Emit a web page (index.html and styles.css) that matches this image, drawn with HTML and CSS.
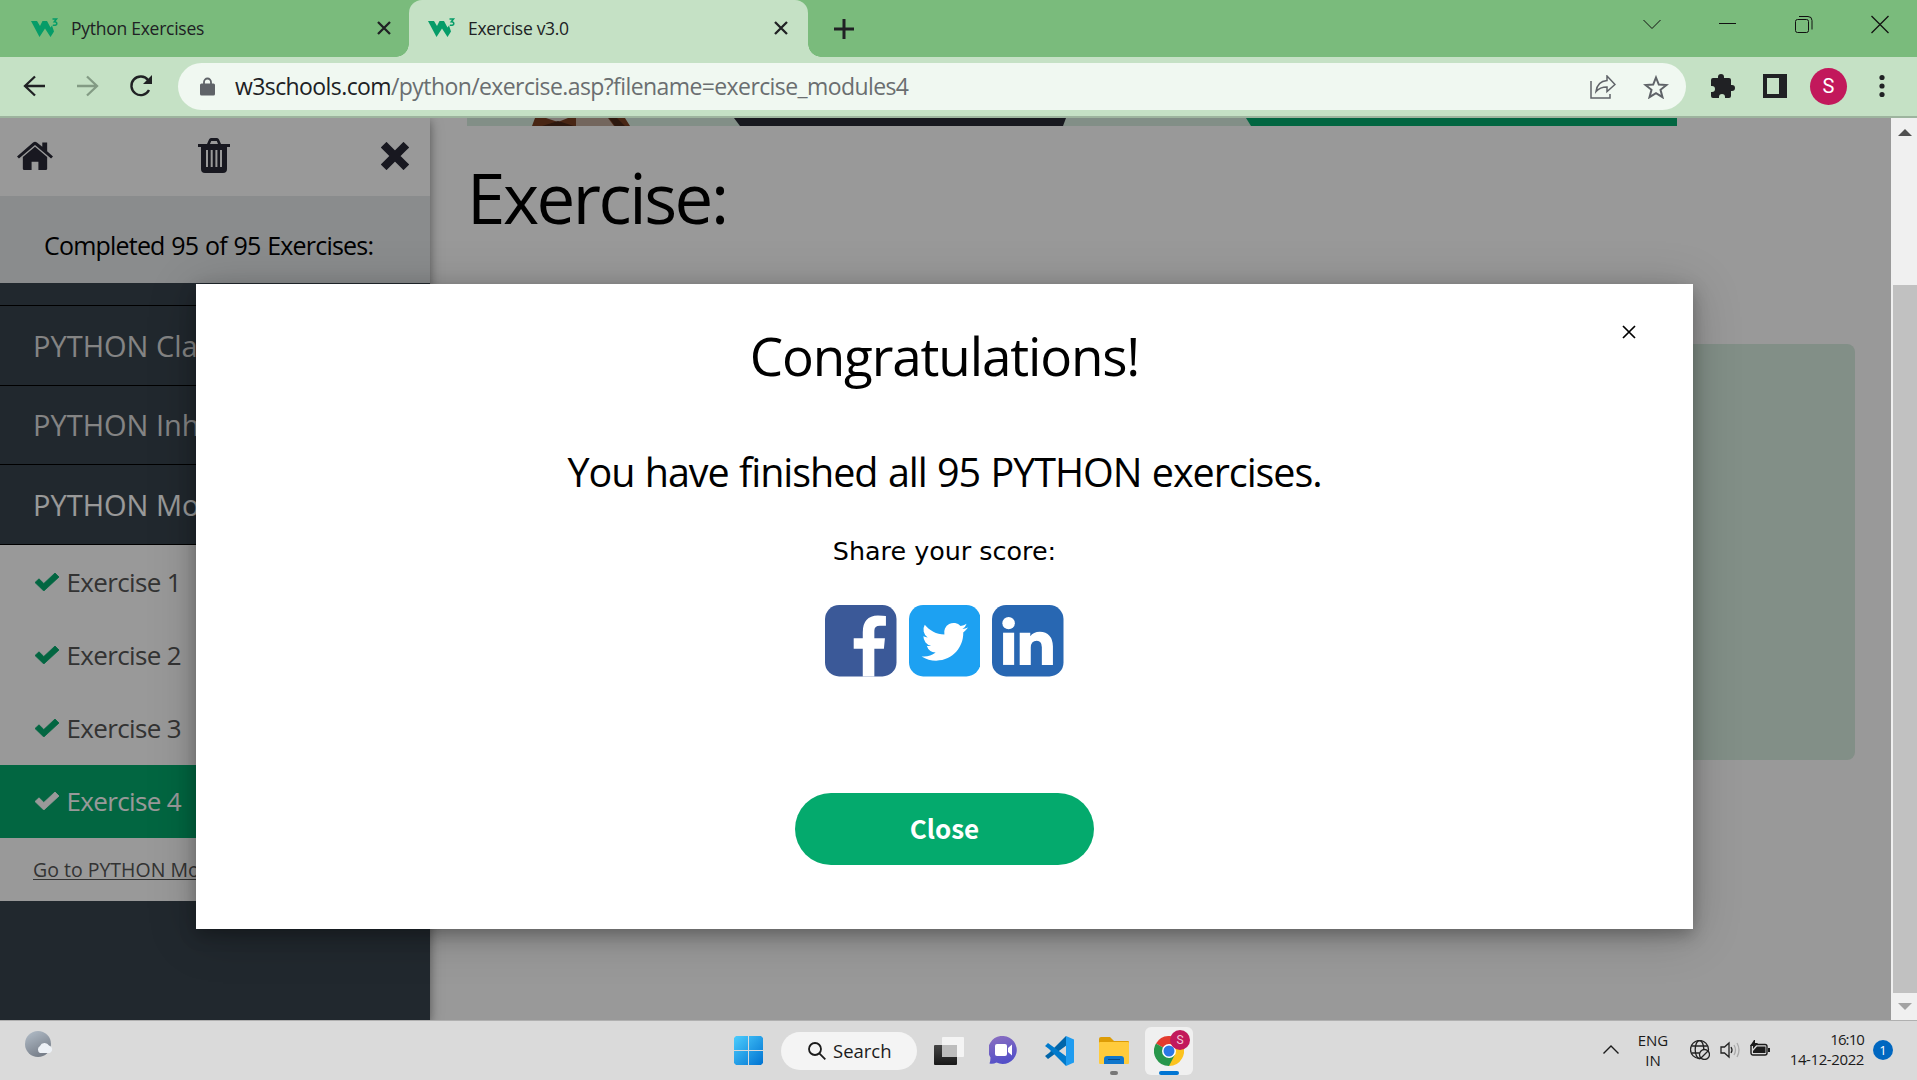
FILE: index.html
```html
<!DOCTYPE html>
<html lang="en">
<head>
<meta charset="utf-8">
<title>Exercise v3.0</title>
<link rel="stylesheet" href="styles.css">
</head>
<body>
<svg class="defs" width="0" height="0">
  <defs>
    <symbol id="w3" viewBox="0 0 28 20">
      <path d="M0 3h6l3 5 2.500-5H16l3.500 6.500 1.500-2 2 6-3.500 5.500-5.500-8.500L8.500 19z" fill="#059c68"/>
      <path d="M21.500 1h4l-2.200 2.700q2.500 0 2.500 2t-4 1.500" fill="none" stroke="#059c68" stroke-width="1.500"/>
    </symbol>
    <symbol id="x" viewBox="0 0 14 14"><path d="M1 1l12 12M13 1L1 13" fill="none" stroke="currentColor" stroke-width="2.300"/></symbol>
    <symbol id="check" viewBox="0 0 24 18"><path d="M0 9.500L4 5.800l4.800 4.700L20 0l4 4L8.800 18z" fill="currentColor" stroke="currentColor" stroke-linejoin="round" stroke-width=".8"/></symbol>
  </defs>
</svg>

<header class="browser">
  <div class="tabs">
    <div class="tab">
      <svg class="fav"><use href="#w3"/></svg><span class="tab-title">Python Exercises</span>
      <svg class="tab-x"><use href="#x"/></svg>
    </div>
    <div class="tab active">
      <svg class="fav"><use href="#w3"/></svg><span class="tab-title t2">Exercise v3.0</span>
      <svg class="tab-x"><use href="#x"/></svg>
    </div>
    <svg class="plus" width="20" height="20"><path d="M10 0v20M0 10h20" stroke="#202124" stroke-width="3"/></svg>
    <div class="controls">
      <svg width="76" height="48"><path d="M29.500 20l8.500 8.500 8.500-8.500" fill="none" stroke="#111"/></svg>
      <svg width="76" height="48"><path d="M29 23.500h17" stroke="#111"/></svg>
      <svg width="76" height="48" fill="none" stroke="#111"><rect x="29.500" y="19.500" width="13" height="13" rx="2"/><path d="M33 16.500h9q4 0 4 4v9"/></svg>
      <svg width="76" height="48"><path d="M29.500 16l17 17M46.500 16l-17 17" stroke="#111" stroke-width="1.300"/></svg>
    </div>
  </div>
  <div class="toolbar">
    <svg width="22" height="22" fill="none" stroke="#202124" stroke-width="2.300"><path d="M22 11H2.500M12 1.500L2 11l10 9.500"/></svg>
    <svg width="22" height="22" fill="none" stroke="#839b84" stroke-width="2.300"><path d="M0 11h19.500M10 1.500L20 11l-10 9.500"/></svg>
    <svg width="24" height="24"><path d="M20 16a9.300 9.300 0 1 1-1-10" fill="none" stroke="#202124" stroke-width="2.400"/><path d="M23 1v9h-9z" fill="#202124"/></svg>
    <div class="omnibox">
      <svg class="lock" width="15" height="19"><path d="M4 8V5a3.500 3.500 0 0 1 7 0v3" fill="none" stroke="#5f6368" stroke-width="1.800"/><rect y="6.500" width="15" height="12" rx="1.500" fill="#5f6368"/></svg>
      <span class="url"><b>w3schools.com</b>/python/exercise.asp?filename=exercise_modules4</span>
      <svg class="share" width="26" height="24" fill="none" stroke="#5f6368" stroke-width="1.500"><path d="M1 6v17h19v-4"/><path d="M6 16.500C7 9 11 6 17 5.500V1l8 8.500-8 7v-4.500c-5 0-8 1-11 4.500z"/></svg>
      <svg width="26" height="24"><path d="M13 2.500l2.800 7 7.700.5-6 4.800 2 7.400-6.500-4.100-6.500 4.100 2-7.400-6-4.800 7.700-.5z" fill="none" stroke="#5f6368" stroke-width="2"/></svg>
    </div>
    <svg class="puzzle" width="24" height="24" fill="#202124"><path d="M2 4h5V3a3 3 0 0 1 6 0v1h5q2 0 2 2v5h1a3 3 0 0 1 0 6h-1v5q0 2-2 2h-4v-1a3 3 0 0 0-6 0v1H2q-2 0-2-2v-4h1a3 3 0 0 0 0-6H0V6q0-2 2-2z"/></svg>
    <svg width="24" height="24"><path d="M0 0h24v24H0zM4 4v16h12V4z" fill="#202124" fill-rule="evenodd"/></svg>
    <span class="avatar">S</span>
    <svg width="6" height="24" fill="#202124"><circle cx="3" cy="3.500" r="2.600"/><circle cx="3" cy="12" r="2.600"/><circle cx="3" cy="20.500" r="2.600"/></svg>
  </div>
</header>

<div class="viewport">
  <div class="page">
    <nav class="side">
      <div class="side-tools">
        <svg width="36" height="30" viewBox="0 0 37 30" fill="#282936"><path d="M18.500 5.500L31 16v12q0 1.500-1.500 1.500H22V21h-7v8.500H7.500Q6 29.500 6 28V16z"/><path d="M0 15.500L16.500 1q2-1.500 4 0L26 5.500V1h5v9l6 5.500-2 2L18.500 3.700 2 17.500z"/></svg>
        <svg class="trash" width="32" height="35" fill="#282936"><path d="M0 6h9l2-4.500Q11.600 0 13 0h6q1.400 0 2 1.500L23 6h9v3h-3v22q0 4-4 4H7q-4 0-4-4V9H0zM12 6h8l-1.200-3h-5.600zM8 12v17h2V12zm4.700 0v17h2V12zm4.700 0v17h2V12zM22 12v17h2V12z" fill-rule="evenodd"/></svg>
        <svg width="28" height="28"><path d="M5.500 5.500l17 17M22.500 5.500l-17 17" stroke="#282936" stroke-width="8" stroke-linecap="square"/></svg>
      </div>
      <div class="done">Completed 95 of 95 Exercises:</div>
      <div class="item cut"></div>
      <div class="item">PYTHON Classes</div>
      <div class="item mid">PYTHON Inheritance</div>
      <div class="item open">PYTHON Modules</div>
      <div class="exs">
        <div class="ex"><svg><use href="#check"/></svg>Exercise 1</div>
        <div class="ex"><svg><use href="#check"/></svg>Exercise 2</div>
        <div class="ex"><svg><use href="#check"/></svg>Exercise 3</div>
        <div class="ex current"><svg><use href="#check"/></svg>Exercise 4</div>
        <a class="goto">Go to PYTHON Modules</a>
      </div>
    </nav>
    <main class="content">
      <svg class="banner" width="1210" height="8">
        <rect width="1210" height="8" fill="#d9eee1"/>
        <path d="M68 0h90l5 8H65z" fill="#7a4022"/><path d="M79 0h22l-10 4z" fill="#d9d0c8"/><path d="M75 8l16-5 16 5z" fill="#4c2818"/><path d="M109 0h32l6 8h-38z" fill="#c0aa9c"/><path d="M142 0h8l8 8h-10z" fill="#4c2818"/>
        <path d="M267 0h332l-3 8H273z" fill="#282a35"/>
        <path d="M779 0h431v8H784z" fill="#04aa6d"/>
      </svg>
      <h1>Exercise:</h1>
      <div class="codebox"></div>
    </main>
    <div class="overlay">
      <section class="modal">
        <svg class="modal-x" width="14" height="14"><path d="M1 1l12 12M13 1L1 13" stroke="#000" stroke-width="1.700"/></svg>
        <h2>Congratulations!</h2>
        <p class="msg">You have finished all 95 PYTHON exercises.</p>
        <p class="score">Share your score:</p>
        <div class="socials">
          <svg viewBox="0 0 71 71"><rect width="71" height="71" rx="14" fill="#3b5998"/><path d="M37.500 71V43.500h-9V33h9v-6q0-16 15-16.500 5 0 8 .5v9.500h-6q-5.500 0-5.500 5V33h10.500l-1 10.500H49V71z" fill="#fff"/></svg>
          <svg viewBox="0 0 71 71"><rect width="71" height="71" rx="14" fill="#1da1f2"/><path transform="translate(12.500 13.500) scale(1.920)" fill="#fff" d="M23.950 4.570a10 10 0 0 1-2.820.77 4.960 4.960 0 0 0 2.160-2.720 9.900 9.900 0 0 1-3.120 1.190 4.920 4.920 0 0 0-8.380 4.480C7.690 8.100 4.070 6.130 1.640 3.160a4.920 4.920 0 0 0 1.520 6.570 4.900 4.900 0 0 1-2.230-.61v.06a4.920 4.920 0 0 0 3.950 4.830 5 5 0 0 1-2.210.08 4.940 4.940 0 0 0 4.600 3.420A9.870 9.870 0 0 1 0 19.540a14 14 0 0 0 7.550 2.210c9.050 0 14-7.500 14-13.980 0-.21 0-.42-.02-.63a9.940 9.940 0 0 0 2.460-2.550z"/></svg>
          <svg viewBox="0 0 71 71"><rect width="71" height="71" rx="14" fill="#2867b2"/><g fill="#fff"><circle cx="16.500" cy="18" r="6.200"/><rect x="11" y="27.500" width="11" height="32"/><path d="M27.500 27.500H38V31q3-4.500 9.500-4.500Q60 27 60.500 41v18.500h-11V42q0-6.500-5-6.500-6 0-6 7v17h-11z"/></g></svg>
        </div>
        <button class="close">Close</button>
      </section>
    </div>
  </div>
  <div class="scrollbar">
    <svg width="14" height="7"><path d="M0 7l7-7 7 7z" fill="#505050"/></svg>
    <div class="thumb"></div>
    <svg width="14" height="7"><path d="M0 0l7 7 7-7z" fill="#a3a3a3"/></svg>
  </div>
</div>

<footer class="taskbar">
  <svg class="weather" width="30" height="28">
    <defs><linearGradient id="moon" x1="0" y1="0" x2=".5" y2="1"><stop offset="0" stop-color="#b4bfca"/><stop offset="1" stop-color="#787f8a"/></linearGradient></defs>
    <circle cx="13" cy="13" r="13" fill="url(#moon)"/><path d="M15 22a4 4 0 0 1 0-7 5 5 0 0 1 9-.5 4 4 0 0 1 1 7.500z" fill="#edf1f6"/>
  </svg>
  <div class="apps">
    <svg width="29" height="29"><defs><linearGradient id="win" x1="0" y1="0" x2="1" y2="1"><stop offset="0" stop-color="#4ccdfd"/><stop offset="1" stop-color="#0072d1"/></linearGradient></defs><path d="M2 0h12v14H0V2zM15 0h12l2 2v12H15zM0 15h14v14H2l-2-2zM15 15h14v12l-2 2H15z" fill="url(#win)"/></svg>
    <div class="search"><svg width="18" height="18" fill="none" stroke="#1b1b1b" stroke-width="1.800"><circle cx="7" cy="7" r="6"/><path d="M11.300 11.300l6 6"/></svg>Search</div>
    <svg class="tv" width="30" height="28"><defs><linearGradient id="dk" x2="0" y2="1"><stop stop-color="#454545"/><stop offset="1" stop-color="#181818"/></linearGradient></defs><rect y="8" width="23" height="20" rx="1" fill="url(#dk)"/><rect x="8" width="22" height="20" rx="1" fill="#f4f4f4"/><path d="M8 8h15v12H8z" fill="#bdbdbd"/></svg>
    <svg class="chat" width="29" height="29"><defs><linearGradient id="ch" x2=".3" y2="1"><stop stop-color="#8d70c0"/><stop offset="1" stop-color="#5450c8"/></linearGradient></defs><path d="M14.500 0a14 14 0 1 1-7 26.500Q4 28.500.500 27.500q1-3 1-6A14 14 0 0 1 14.500 0z" fill="url(#ch)"/><rect x="6" y="8" width="12" height="12" rx="2" fill="#fff"/><path d="M19 12l4-3.500v11L19 16z" fill="#fff"/></svg>
    <svg class="vs" width="30" height="30"><path d="M22 0L5 17l-4 3 3 3 19-14z" fill="#0065a9"/><path d="M22 30L5 13l-4-3 3-3 19 14z" fill="#007acc"/><path d="M22 0l8 3.500v23L22 30z" fill="#1f9cf0"/></svg>
    <div class="app folder"><svg width="30" height="27"><path d="M0 2q0-2 2-2h9l4 4h14q1 0 1 1v5H0z" fill="#dd9c06"/><rect y="5" width="30" height="22" rx="1" fill="#ffcb3c"/><path d="M5 27v-5q0-3 3-3h14q3 0 3 3v5z" fill="#0f76cc"/><path d="M9 22.500h12" stroke="#064a8a"/></svg><i class="dot"></i></div>
    <div class="app chrome">
      <svg width="30" height="30" viewBox="-15 -15 30 30"><path d="M0 0L-13-7.500A15 15 0 0 1 13-7.500z" fill="#e33b2e"/><path d="M0 0L13-7.500A15 15 0 0 1 0 15z" fill="#fcc31e"/><path d="M0 0L0 15A15 15 0 0 1-13-7.500z" fill="#27964a"/><path d="M0-7h13.300L6 4z" fill="#fcc31e"/><path d="M-6 3.500L0 7l6-3.500L0 15z" fill="#27964a"/><circle r="7" fill="#fff"/><circle r="5.500" fill="#2b78e4"/></svg>
      <i class="dot wide"></i><span class="badge">S</span>
    </div>
  </div>
  <div class="tray">
    <svg class="chev" width="16" height="9"><path d="M.5 8.500L8 1l7.500 7.500" fill="none" stroke="#1b1b1b" stroke-width="1.400"/></svg>
    <div class="lang">ENG<br>IN</div>
    <svg width="20" height="20" fill="none" stroke="#222" stroke-width="1.300"><circle cx="9.500" cy="9.500" r="9"/><ellipse cx="9.500" cy="9.500" rx="4.300" ry="9"/><path d="M1.500 6h16M1.500 13h8"/><circle cx="14.500" cy="14.500" r="5" fill="#d9d9d9"/><path d="M11 18l7-7"/></svg>
    <svg class="vol" width="20" height="18" fill="none" stroke="#222" stroke-width="1.300"><path d="M1 6v6h3.500l4.500 4V2L4.500 6zM11 6q2 3 0 6"/><path d="M14 4q3 5 0 10M17 2q4 7 0 14" stroke="#aaa"/></svg>
    <svg class="bat" width="20" height="16"><rect x="1" y="4.500" width="16" height="10.500" rx="2" fill="none" stroke="#1b1b1b" stroke-width="1.400"/><path d="M7 6.500h8.500v6.500H3V11zM18 8h2v4h-2zM4 0L0 6h3v3l5-6H5V0z" fill="#1b1b1b"/></svg>
    <div class="clock"><span>16:10</span><br>14-12-2022</div>
    <span class="count">1</span>
  </div>
</footer>
</body>
</html>
```

FILE: styles.css
```css
* { box-sizing: border-box; }
body { margin: 0; width: 1917px; height: 1080px; overflow: hidden; display: flex; flex-direction: column; font-family: "Open Sans", "Noto Sans", sans-serif; color: #000; }
svg { display: block; flex: none; }
.defs { position: absolute; }
h1, h2, p { margin: 0; font-weight: 400; white-space: nowrap; }

/* Browser chrome */
.browser { height: 118px; flex: none; background: #c5e1c5; border-bottom: 2px solid #9db49e; }
.tabs { height: 57px; display: flex; align-items: center; background: #7abb7c; color: #202124; }
.tab { width: 409px; height: 57px; display: flex; align-items: center; padding: 0 18px 1px 31px; }
.tab.active { position: relative; width: 399px; padding: 0 20px 1px 19px; background: #c5e1c5; border-radius: 13px 13px 0 0; }
.tab.active::before, .tab.active::after { content: ""; position: absolute; bottom: 0; width: 13px; height: 13px; }
.tab.active::before { left: -13px; background: radial-gradient(circle at 0 0, transparent 12.5px, #c5e1c5 13px); }
.tab.active::after { right: -13px; background: radial-gradient(circle at 100% 0, transparent 12.5px, #c5e1c5 13px); }
.fav { width: 28px; height: 20px; margin-right: 12px; }
.tab-title { flex: 1; font-size: 17.5px; letter-spacing: -.26px; white-space: nowrap; }
.t2 { letter-spacing: -.3px; }
.tab-x { width: 14px; height: 14px; }
.plus { margin-left: 26px; }
.controls { margin-left: auto; margin-right: -1px; display: flex; align-self: flex-start; }
.toolbar { height: 59px; display: flex; align-items: center; padding: 0 32px 1px 23px; }
.toolbar > svg:nth-child(2) { margin-left: 32px; }
.toolbar > svg:nth-child(3) { margin-left: 30px; }
.omnibox { width: 1508px; height: 47px; margin: 1px 0 0 25px; border-radius: 24px; background: #f0f8f1; display: flex; align-items: center; padding: 0 17px 0 22px; }
.url { flex: 1; margin-left: 20px; padding-bottom: 1px; font-size: 23px; letter-spacing: -.59px; color: #6a6e70; white-space: nowrap; }
.url b { font-weight: 400; color: #202124; }
.share { margin-right: 27px; }
.puzzle { margin: 0 28px 0 25px; }
.avatar { width: 37px; height: 37px; margin: 0 auto 0 23px; border-radius: 50%; background: #c2185b; color: #fff; font: 20px/37px Roboto, sans-serif; text-align: center; }

/* Page */
.viewport { height: 902px; flex: none; display: flex; }
.page { position: relative; width: 1891px; display: flex; overflow: hidden; background: #fff; }
.side { width: 430px; flex: none; background: #38444d; box-shadow: 0 3px 8px rgba(0,0,0,.3), 0 3px 15px rgba(0,0,0,.2); z-index: 1; }
.side-tools { height: 78px; display: flex; justify-content: space-between; align-items: center; background: #fff; padding: 0 21px 3px 17px; }
.trash { margin-left: -7px; margin-bottom: 1px; }
.done { height: 87px; padding: 12px 0 0 44px; line-height: 75px; font-size: 25px; letter-spacing: -.8px; word-spacing: 1px; background: #e7e9eb; white-space: nowrap; }
.item { height: 80px; line-height: 79px; padding-left: 33px; border-bottom: 1px solid #000; font-size: 29px; color: #ddd; white-space: nowrap; }
.item.cut { height: 23px; }
.item.mid { height: 79px; line-height: 78px; }
.item.open { color: #fff; }
.exs { background: #fff; }
.ex { height: 73.300px; display: flex; align-items: center; padding-left: 35px; font-size: 26px; letter-spacing: -.65px; color: #555; }
.ex svg { width: 24px; height: 18px; margin-right: 7.500px; color: #04aa6d; }
.ex.current { padding-bottom: 1px; background: #04aa6d; color: #fff; }
.ex.current svg { color: #fff; }
.goto { display: block; height: 63px; line-height: 63px; padding-left: 33px; font-size: 19.500px; color: #555; text-decoration: underline; text-underline-offset: 2px; white-space: nowrap; }
.content { flex: 1; padding: 0 36px 0 37px; }
h1 { margin-top: 21px; height: 100px; line-height: 100px; font-size: 69px; letter-spacing: -2.450px; }
.codebox { margin-top: 97px; height: 416px; border-radius: 8px; background: #d9eee1; }
.overlay { position: absolute; inset: 0; z-index: 2; background: rgba(0,0,0,.4); padding: 166px 198px 0 196px; }
.modal { position: relative; height: 645px; background: #fff; box-shadow: 0 6px 15px rgba(0,0,0,.25), 0 6px 45px rgba(0,0,0,.22); padding-top: 36px; display: flex; flex-direction: column; align-items: center; }
.modal-x { position: absolute; right: 57px; top: 41px; }
h2 { line-height: 72px; font-size: 53px; letter-spacing: -1.150px; }
.msg { margin-top: 53px; line-height: 54px; font-size: 39.500px; letter-spacing: -1.050px; word-spacing: 1.200px; }
.score { margin-top: 33px; line-height: 38px; font-family: "DejaVu Sans", sans-serif; font-size: 25.400px; }
.socials { margin-top: 35px; display: flex; gap: 12px; }
.socials svg { width: 71.500px; height: 71.500px; }
.close { margin-top: 116.500px; width: 299px; height: 72px; padding: 0 0 3px; border: 0; border-radius: 36px; background: #04aa6d; color: #fff; font: bold 26px "Noto Sans CJK SC", sans-serif; }
.scrollbar { width: 26px; background: #f0f0f0; display: flex; flex-direction: column; align-items: center; padding: 11px 0 10px 2px; }
.thumb { width: 24px; height: 708px; margin: 149px 0 auto; background: #c1c1c1; }

/* Taskbar */
.taskbar { height: 60px; display: flex; background: #dadada; border-top: 1px solid #b0b0b0; color: #1b1b1b; }
.weather { margin: 10px 0 0 25px; }
.apps { margin-left: 679px; display: flex; align-items: center; }
.search { width: 136px; height: 38px; margin: 0 17px 0 18px; border-radius: 19px; background: #f4f4f4; display: flex; align-items: center; padding-left: 27px; font-size: 18.500px; }
.search svg { margin-right: 7px; }
.chat { margin-left: 25px; }
.vs { margin-left: 26px; }
.app { position: relative; height: 48px; display: flex; align-items: center; justify-content: center; }
.folder { width: 30px; margin: 0 16px 0 25px; }
.chrome { width: 48px; border-radius: 6px; background: #f0f0f0; }
.dot { position: absolute; left: 11px; bottom: 0; width: 8px; height: 4px; border-radius: 2px; background: #777; }
.dot.wide { left: 14px; width: 20px; background: #0075d3; }
.badge { position: absolute; right: 3px; top: 3px; width: 20px; height: 20px; border-radius: 50%; background: #c2185b; color: #f3c6d8; font: 12px/20px Roboto, sans-serif; text-align: center; }
.tray { margin-left: auto; display: flex; align-items: center; padding: 0 24px 2px 0; }
.lang { width: 32px; margin: 0 21px 0 18px; text-align: center; font-size: 15px; line-height: 20px; }
.vol { margin: 0 10px; }
.bat { margin-bottom: 3px; }
.clock { width: 94px; text-align: right; font-size: 15px; line-height: 20px; letter-spacing: -.4px; margin-bottom: 2px; }
.clock span { letter-spacing: -.9px; }
.count { width: 20px; height: 20px; margin-left: 9px; border-radius: 50%; background: #0067c0; color: #fff; font-size: 13px; line-height: 20px; text-align: center; }
```
